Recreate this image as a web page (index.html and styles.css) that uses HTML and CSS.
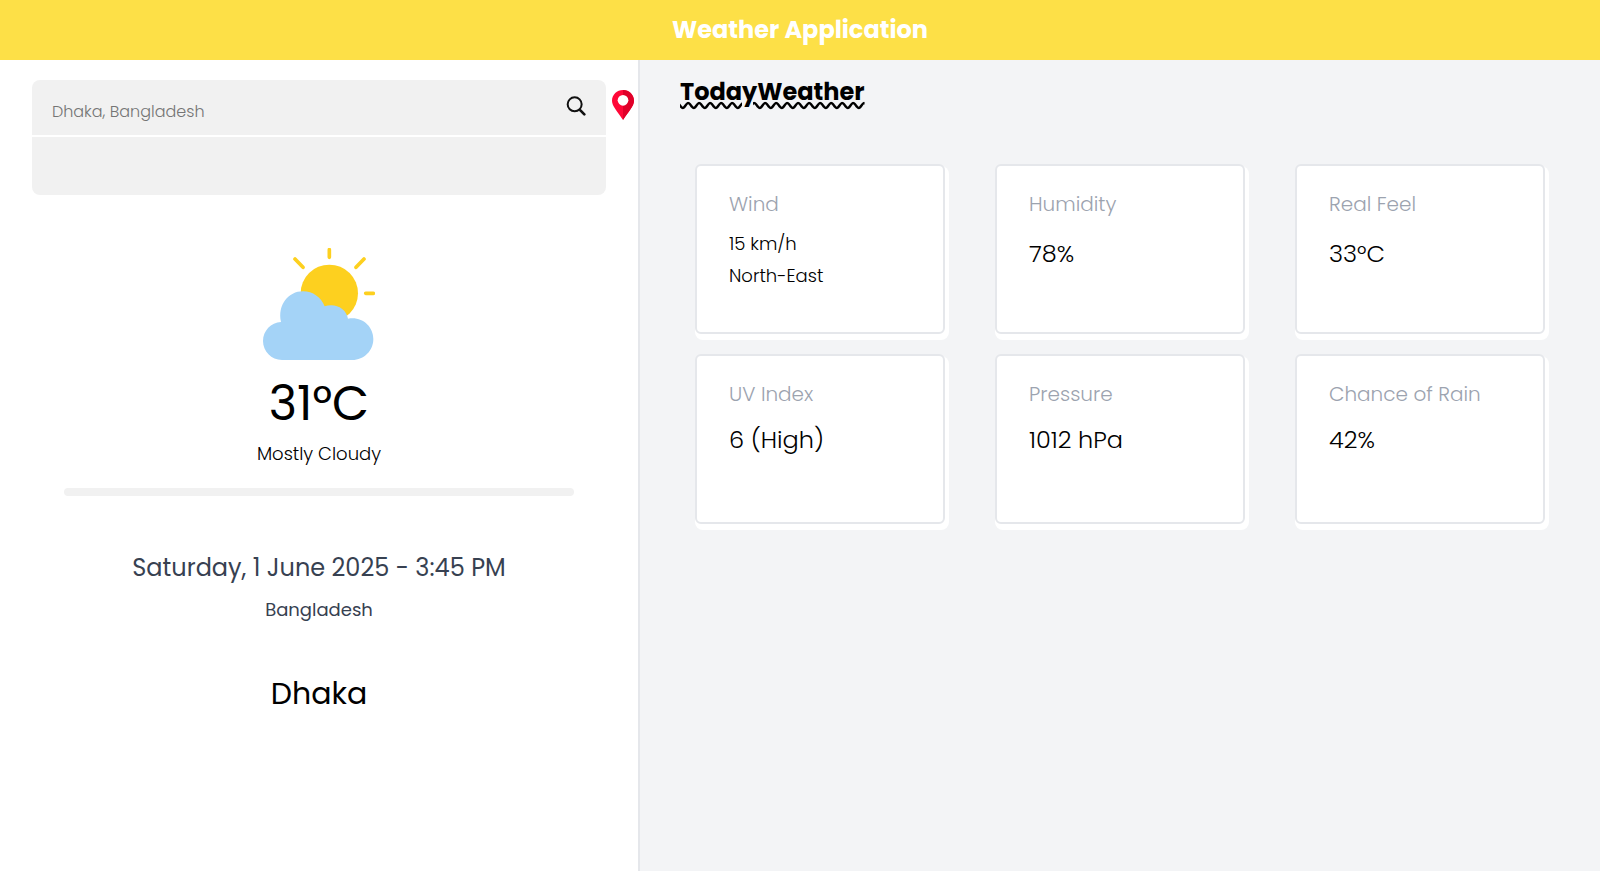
FILE: index.html
```html
<!DOCTYPE html>
<html lang="en">
<head>
<meta charset="utf-8">
<title>Weather Application</title>
<link rel="stylesheet" href="styles.css">
</head>
<body>
<header class="topbar"><h1 class="topbar-title">Weather Application</h1></header>
<main class="layout">
  <section class="current" aria-label="Current weather">
    <div class="search-row">
      <form class="search">
        <div class="search-field">
          <input class="search-input" type="text" placeholder="Dhaka, Bangladesh" aria-label="Location">
          <button class="icon-button search-button" type="button" aria-label="Search">
            <svg width="20" height="20" viewBox="0 0 60 60" fill="none" stroke="#111">
              <circle cx="26" cy="25" r="21" stroke-width="6"/>
              <path d="M40 40 44 44" stroke-width="6"/>
              <path d="M44 44 55 55" stroke-width="8" stroke-linecap="round"/>
            </svg>
          </button>
        </div>
        <div class="search-results"></div>
      </form>
      <button class="icon-button pin" type="button" aria-label="Use my location">
        <svg width="22" height="30" viewBox="0 0 66 90">
          <path d="M33 0C15 0 0 14 0 32c0 17 17 32 33 58 16-26 33-41 33-58C66 14 51 0 33 0Z" fill="#ff0838"/>
          <path d="M33 0c18 0 33 14 33 32 0 17-17 32-33 58Z" fill="#e00029"/>
          <circle cx="33" cy="31" r="16" fill="#fff"/>
        </svg>
      </button>
    </div>
    <svg class="weather-icon" width="112" height="112" viewBox="69 54 336 336" aria-hidden="true">
      <circle cx="268" cy="190" r="86" fill="#fdd01f"/>
      <path d="M268 59v23M165 87l24 25M372 87l-24 25M377 190h23" stroke="#fdd01f" stroke-width="11" stroke-linecap="round"/>
      <path d="M126 390C94 390 69 364 69 333C69 303 93 277 123 276C112 225 145 184 189 184c30 0 54 18 65 45 31-11 65 6 70 37 42-8 76 23 76 61 0 35-28 63-63 63Z" fill="#a4d3f7"/>
    </svg>
    <p class="temperature">31°C</p>
    <p class="condition">Mostly Cloudy</p>
    <div class="divider"></div>
    <p class="date">Saturday, 1 June 2025 - 3:45 PM</p>
    <p class="country">Bangladesh</p>
    <p class="city">Dhaka</p>
  </section>
  <section class="today">
    <h2 class="today-title">TodayWeather</h2>
    <div class="cards">
      <article class="card"><h3 class="card-title">Wind</h3><p class="wind">15 km/h</p><p class="wind">North-East</p></article>
      <article class="card"><h3 class="card-title spaced">Humidity</h3><p class="value">78%</p></article>
      <article class="card"><h3 class="card-title spaced">Real Feel</h3><p class="value">33°C</p></article>
      <article class="card"><h3 class="card-title medium">UV Index</h3><p class="value">6 (High)</p></article>
      <article class="card"><h3 class="card-title medium">Pressure</h3><p class="value">1012 hPa</p></article>
      <article class="card"><h3 class="card-title medium">Chance of Rain</h3><p class="value">42%</p></article>
    </div>
  </section>
</main>
</body>
</html>
```
FILE: styles.css
```css
* { box-sizing: border-box; margin: 0; }
body {
  min-height: 100vh;
  display: flex;
  flex-direction: column;
  font-family: Poppins, Inter, "Open Sans", sans-serif;
  font-weight: 300;
  color: #000;
  background: #fff;
}
.topbar { padding: 12px; background: #fde047; text-align: center; }
.topbar-title { font-size: 24px; line-height: 36px; font-weight: 700; color: #fff; }
.layout { flex: 1; display: grid; grid-template-columns: 2fr 3fr; }

.current {
  display: flex;
  flex-direction: column;
  align-items: center;
  padding-top: 20px;
  border-right: 2px solid #e5e7eb;
}
.search-row { width: 100%; display: flex; align-items: flex-start; gap: 6px; padding-left: 5%; }
.search { width: calc(100% - 32px); display: grid; gap: 2px; border-radius: 8px; overflow: hidden; }
.search-field { display: flex; align-items: center; height: 55px; padding: 0 20px; background: #f1f1f1; }
.search-input {
  flex: 1;
  min-width: 0;
  padding: 8px 0 0;
  border: 0;
  outline: 0;
  background: transparent;
  font: inherit;
  font-size: 16px;
  line-height: 24px;
}
.search-input::placeholder { color: #757575; }
.search-results { height: 58px; background: #f1f1f1; }
.icon-button { flex: none; display: block; padding: 0; border: 0; background: transparent; cursor: pointer; }
.icon-button svg { display: block; }
.search-button { padding-bottom: 4px; }
.pin { margin-top: 10px; margin-right: 4px; }

.weather-icon { margin-top: 53px; }
.temperature { margin-top: 8px; font-size: 48px; line-height: 72px; font-weight: 400; }
.condition { font-size: 18px; line-height: 28px; }
.divider { width: 80%; height: 8px; margin-top: 20px; border-radius: 4px; background: #f1f1f1; }
.date { margin-top: 54px; font-size: 24px; line-height: 36px; font-weight: 400; color: #374151; }
.country { margin-top: 10px; font-size: 18px; line-height: 28px; font-weight: 400; color: #374151; }
.city { margin-top: 48px; font-size: 30px; line-height: 44px; font-weight: 400; }

.today { padding: 14px 55px 40px; background: #f3f4f6; }
.today-title {
  margin-left: -15px;
  font-size: 24px;
  line-height: 36px;
  font-weight: 700;
  text-decoration: underline wavy;
}
.cards { display: grid; grid-template-columns: repeat(3, 1fr); gap: 20px 50px; margin-top: 54px; }
.card {
  min-height: 170px;
  padding: 24px 32px;
  border: 2px solid #e5e7eb;
  border-radius: 6px;
  background: #fff;
  box-shadow: 2px 4px 0 2px #fff;
}
.card-title { margin-bottom: 10px; font-size: 20px; line-height: 28px; font-weight: 300; color: #9ca3af; }
.card-title.medium { margin-bottom: 14px; }
.card-title.spaced { margin-bottom: 18px; }
.wind { font-size: 18px; line-height: 32px; }
.value { font-size: 24px; line-height: 36px; }
```
